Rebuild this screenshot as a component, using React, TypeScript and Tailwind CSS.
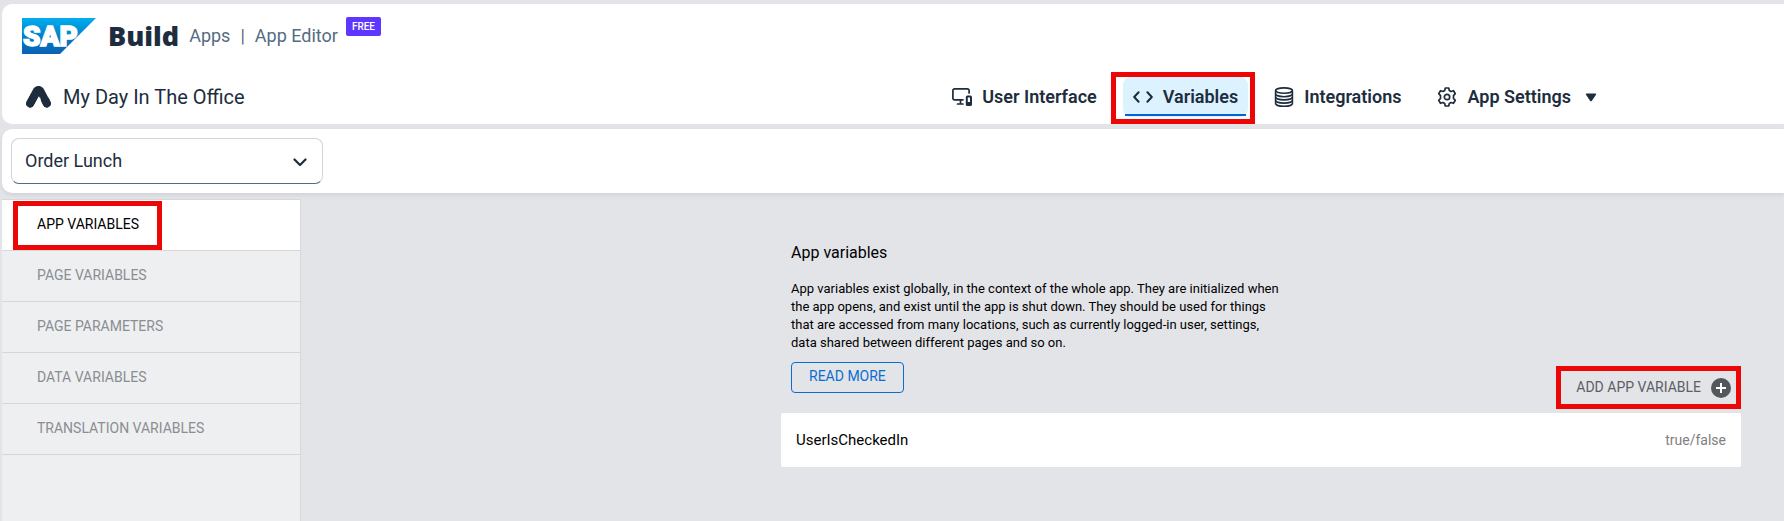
import { useState } from "react";
import type { ReactNode } from "react";

function SapLogo() {
  return (
    <svg width="74" height="36" viewBox="0 0 74 36" role="img" aria-label="SAP">
      <defs>
        <linearGradient id="sap" x1="0" y1="0" x2="0" y2="1">
          <stop offset="0" stopColor="#00aeef" />
          <stop offset="0.25" stopColor="#0097dc" />
          <stop offset="0.7" stopColor="#0570c0" />
          <stop offset="1" stopColor="#0a62b3" />
        </linearGradient>
      </defs>
      <path d="M0 0H74L38 36H0Z" fill="url(#sap)" />
      <text x="1" y="28" fill="#fff" stroke="#fff" strokeWidth="1.5" className="font-['Roboto'] text-[28px] font-black">
        SAP
      </text>
    </svg>
  );
}

function AppMark() {
  return (
    <svg width="25" height="22" viewBox="0 0 25 22" fill="none" aria-hidden="true">
      <path d="M4.2 17.400L10.800 4.800Q12.500 3 14.200 4.800L20.800 17.400" stroke="#1d2d3e" strokeWidth="8" strokeLinecap="round" strokeLinejoin="round" />
      <path d="M8.800 22L13.900 10.500L16.600 22Z" fill="#fff" />
      <path d="M4.200 17.400L8.500 9.600" stroke="#1d2d3e" strokeWidth="8" strokeLinecap="round" />
      <path d="M19.600 14.800L20.800 17.400" stroke="#1d2d3e" strokeWidth="8" strokeLinecap="round" />
    </svg>
  );
}

function ScreensIcon() {
  return (
    <svg width="20" height="18" viewBox="0 0 20 18" fill="none" stroke="#1d2d3e" strokeWidth="1.7" aria-hidden="true">
      <path d="M11 11.800H2.600A1.700 1.700 0 0 1 .9 10.100V2.600A1.700 1.700 0 0 1 2.600 .9H15.400A1.700 1.700 0 0 1 17.100 2.600V5" strokeLinecap="round" />
      <path d="M8.500 12V15.800M5.500 16H11" strokeLinecap="round" />
      <rect x="14.800" y="8.600" width="4.200" height="8.400" rx=".6" strokeWidth="2" />
      <path d="M15 15.300H19" strokeWidth="2.600" />
    </svg>
  );
}

function CodeIcon() {
  return (
    <svg width="20" height="12" viewBox="0 0 20 12" fill="none" stroke="#1d2d3e" strokeWidth="2" strokeLinecap="round" strokeLinejoin="round" aria-hidden="true">
      <path d="M5.600 1.200L1.200 6L5.600 10.800M14.400 1.200L18.800 6L14.400 10.800" />
    </svg>
  );
}

function DatabaseIcon() {
  return (
    <svg width="20" height="20" viewBox="0 0 20 20" fill="none" stroke="#1d2d3e" strokeWidth="1.600" aria-hidden="true">
      <ellipse cx="10" cy="3.600" rx="8.400" ry="2.700" />
      <path d="M1.600 3.600V16.400C1.600 18 5.400 19.200 10 19.200S18.400 18 18.400 16.400V3.600" />
      <path d="M1.600 6.800C1.600 8.400 5.400 9.700 10 9.700S18.400 8.400 18.400 6.800M1.600 10C1.600 11.600 5.400 12.900 10 12.900S18.400 11.600 18.400 10M1.600 13.200C1.600 14.800 5.400 16.100 10 16.100S18.400 14.800 18.400 13.200" />
    </svg>
  );
}

function GearIcon() {
  return (
    <svg width="20" height="20" viewBox="0 0 20 20" fill="none" stroke="#1d2d3e" strokeWidth="1.700" strokeLinejoin="round" aria-hidden="true">
      <path d="M8.300 1H11.700L12.300 3.500L14 4.500L16.500 3.700L18.300 6.700L16.500 8.600V11.400L18.300 13.300L16.500 16.300L14 15.500L12.300 16.500L11.700 19H8.300L7.700 16.500L6 15.500L3.500 16.300L1.700 13.300L3.500 11.400V8.600L1.700 6.700L3.500 3.700L6 4.500L7.700 3.500Z" />
      <circle cx="10" cy="10" r="2.700" />
    </svg>
  );
}

function Highlight({ className }: { className: string }) {
  return <span aria-hidden="true" className={`pointer-events-none absolute border-5 border-[#ec0606] ${className}`} />;
}

function NavItem({ icon, label, children }: { icon: ReactNode; label: string; children?: ReactNode }) {
  return (
    <button type="button" className="flex h-10 items-center gap-2.5 px-2.5 text-lg font-semibold whitespace-nowrap">
      {icon}
      {label}
      {children}
    </button>
  );
}

const sections = ["APP VARIABLES", "PAGE VARIABLES", "PAGE PARAMETERS", "DATA VARIABLES", "TRANSLATION VARIABLES"];

export default function App() {
  const [page, setPage] = useState("Order Lunch");

  return (
    <div className="flex min-h-screen flex-col bg-[#e3e4e8] pt-1 pl-0.5 font-['Roboto',sans-serif] text-[#1d2d3e]">
      <header className="rounded-l-[10px] bg-white pb-[7px]">
        <div className="flex h-[73px] items-start pt-3.5 pl-5">
          <a href="#home" className="flex items-center">
            <SapLogo />
            <span className="ml-3 font-['Open_Sans'] text-[27px] leading-9 font-extrabold">Build</span>
          </a>
          <p className="ml-2.5 flex gap-2.5 text-lg leading-9 text-[#556b82]">
            <span>Apps</span>
            <span>|</span>
            <span>App Editor</span>
          </p>
          <span className="-mt-px ml-2 rounded-xs bg-[#5d36ff] px-1.5 text-[10px] leading-[19px] font-medium text-white">FREE</span>
        </div>
        <div className="flex h-10 items-center pl-6">
          <AppMark />
          <h1 className="ml-3 text-xl">My Day In The Office</h1>
          <nav className="mr-[177px] ml-auto flex items-center">
            <NavItem icon={<ScreensIcon />} label="User Interface" />
            <button
              type="button"
              aria-current="page"
              className="relative mx-4 flex h-10 items-center gap-2.5 rounded-lg bg-[#ddf2ff] px-2.5 text-lg font-semibold"
            >
              <CodeIcon />
              Variables
              <span className="absolute inset-x-0.5 bottom-px h-0.5 bg-[#0064d9]" />
              <Highlight className="-top-[5px] -right-[7px] -bottom-[7px] -left-3" />
            </button>
            <NavItem icon={<DatabaseIcon />} label="Integrations" />
            <div className="w-4" />
            <NavItem icon={<GearIcon />} label="App Settings">
              <svg width="12" height="9" viewBox="0 0 12 9" className="ml-1" aria-hidden="true">
                <path d="M1.500 .5H10.500Q11.600 .7 11 1.700L6.900 7.800Q6 8.800 5.100 7.800L1 1.700Q.4 .7 1.500 .5Z" fill="#1d2d3e" />
              </svg>
            </NavItem>
          </nav>
        </div>
      </header>

      <div className="relative mt-[5px] rounded-l-[10px] bg-white px-[9px] py-[9px] shadow-[0_2px_4px_rgba(0,0,0,0.08)]">
        <div className="relative w-[312px] max-w-full">
          <select
            aria-label="Page"
            value={page}
            onChange={(e) => setPage(e.target.value)}
            className="block h-[46px] w-full appearance-none rounded-lg border border-[#cdd5dd] border-b-[#556b82] bg-white px-[13px] text-lg"
          >
            <option>Order Lunch</option>
          </select>
          <svg width="14" height="9" viewBox="0 0 14 9" className="pointer-events-none absolute top-5 right-4" fill="none" aria-hidden="true">
            <path d="M1.500 1.500L7 7L12.500 1.500" stroke="#1d2d3e" strokeWidth="2.200" strokeLinecap="round" strokeLinejoin="round" />
          </svg>
        </div>
      </div>

      <div className="mt-1.5 flex grow">
        <aside className="w-[299px] shrink-0 border-t border-r border-[#d5d7da] bg-[#eeeff1]">
          <ul>
            {sections.map((name, i) => (
              <li key={name} className="relative border-b border-[#d5d7da]">
                <button
                  type="button"
                  className={
                    i === 0
                      ? "block h-[50px] w-full bg-white pb-0.5 pl-[35px] text-left text-sm text-black"
                      : "block h-[50px] w-full pb-0.5 pl-[35px] text-left text-sm text-[#8a8d92]"
                  }
                >
                  {name}
                </button>
                {i === 0 && <Highlight className="top-px bottom-0 left-[11px] w-[149px]" />}
              </li>
            ))}
          </ul>
        </aside>

        <main className="grow pr-[43px] pl-10 text-black">
          <div className="ml-auto max-w-[960px] pt-11">
            <div className="px-2.5">
              <h2 className="text-base leading-5">App variables</h2>
              <p className="mt-[17px] max-w-[490px] text-[13px] leading-[18px]">
                App variables exist globally, in the context of the whole app. They are initialized when the app opens, and exist
                until the app is shut down. They should be used for things that are accessed from many locations, such as currently
                logged-in user, settings, data shared between different pages and so on.
              </p>
            </div>
            <div className="flex items-start justify-between pt-2.5 pl-2.5">
              <a href="#docs" className="rounded-sm border border-[#0a6ed1] px-[17px] pt-[3px] pb-1.5 text-sm leading-5 text-[#0a6ed1]">
                READ MORE
              </a>
              <button type="button" className="relative mt-1 mb-1 flex h-[43px] items-center gap-2.5 pr-2.5 pl-5 text-sm text-[#5b6066]">
                <span className="pb-0.5">ADD APP VARIABLE</span>
                <svg width="20" height="20" viewBox="0 0 20 20" className="mt-px" aria-hidden="true">
                  <circle cx="10" cy="10" r="10" fill="#53585c" />
                  <path d="M10 5V15M5 10H15" stroke="#fff" strokeWidth="2" />
                </svg>
                <Highlight className="inset-0" />
              </button>
            </div>
            <ul>
              <li className="flex h-[54px] items-center justify-between rounded-xs bg-white px-[15px]">
                <span className="text-[15px]">UserIsCheckedIn</span>
                <span className="text-sm text-[#808080]">true/false</span>
              </li>
            </ul>
          </div>
        </main>
      </div>
    </div>
  );
}
